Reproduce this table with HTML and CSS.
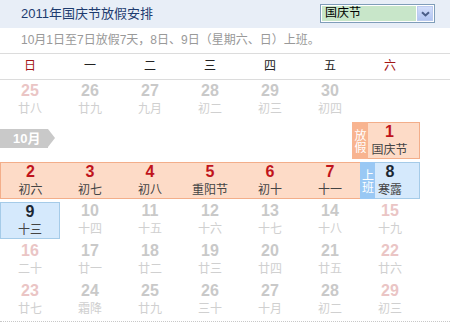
FILE: index.html
```html
<!DOCTYPE html>
<html lang="zh-CN">
<head>
<meta charset="utf-8">
<title>2011年国庆节放假安排</title>
<link rel="stylesheet" href="styles.css">
</head>
<body>
<div class="page">
  <header class="top">
    <h1 class="title">2011年国庆节放假安排</h1>
    <div class="select">
      <span class="select-value">国庆节</span>
      <span class="select-btn"><svg width="9" height="6" viewBox="0 0 9 6"><path d="M1 1.2 L4.5 4.5 L8 1.2" fill="none" stroke="#4a5d88" stroke-width="2"/></svg></span>
    </div>
  </header>
  <p class="note">10月1日至7日放假7天，8日、9日（星期六、日）上班。</p>
  <div class="weekdays">
    <span class="wkend">日</span><span>一</span><span>二</span><span>三</span><span>四</span><span>五</span><span class="wkend">六</span>
  </div>
  <div class="cal">
    <div class="cal-row">
      <div class="day wkd"><b class="num">25</b><span class="lunar">廿八</span></div>
      <div class="day"><b class="num">26</b><span class="lunar">廿九</span></div>
      <div class="day"><b class="num">27</b><span class="lunar">九月</span></div>
      <div class="day"><b class="num">28</b><span class="lunar">初二</span></div>
      <div class="day"><b class="num">29</b><span class="lunar">初三</span></div>
      <div class="day"><b class="num">30</b><span class="lunar">初四</span></div>
    </div>
    <div class="cal-row">
      <div class="month">10月</div>
      <div class="day hol single"><span class="tag tag-off"><span class="tag-text">放假</span></span><b class="num">1</b><span class="lunar">国庆节</span></div>
    </div>
    <div class="cal-row">
      <div class="day hol band-start"><b class="num">2</b><span class="lunar">初六</span></div>
      <div class="day hol"><b class="num">3</b><span class="lunar">初七</span></div>
      <div class="day hol"><b class="num">4</b><span class="lunar">初八</span></div>
      <div class="day hol"><b class="num">5</b><span class="lunar">重阳节</span></div>
      <div class="day hol"><b class="num">6</b><span class="lunar">初十</span></div>
      <div class="day hol"><b class="num">7</b><span class="lunar">十一</span></div>
      <div class="day work"><span class="tag tag-on"><span class="tag-text">上班</span></span><b class="num">8</b><span class="lunar">寒露</span></div>
    </div>
    <div class="cal-row">
      <div class="day work"><b class="num">9</b><span class="lunar">十三</span></div>
      <div class="day"><b class="num">10</b><span class="lunar">十四</span></div>
      <div class="day"><b class="num">11</b><span class="lunar">十五</span></div>
      <div class="day"><b class="num">12</b><span class="lunar">十六</span></div>
      <div class="day"><b class="num">13</b><span class="lunar">十七</span></div>
      <div class="day"><b class="num">14</b><span class="lunar">十八</span></div>
      <div class="day wkd"><b class="num">15</b><span class="lunar">十九</span></div>
    </div>
    <div class="cal-row">
      <div class="day wkd"><b class="num">16</b><span class="lunar">二十</span></div>
      <div class="day"><b class="num">17</b><span class="lunar">廿一</span></div>
      <div class="day"><b class="num">18</b><span class="lunar">廿二</span></div>
      <div class="day"><b class="num">19</b><span class="lunar">廿三</span></div>
      <div class="day"><b class="num">20</b><span class="lunar">廿四</span></div>
      <div class="day"><b class="num">21</b><span class="lunar">廿五</span></div>
      <div class="day wkd"><b class="num">22</b><span class="lunar">廿六</span></div>
    </div>
    <div class="cal-row">
      <div class="day wkd"><b class="num">23</b><span class="lunar">廿七</span></div>
      <div class="day"><b class="num">24</b><span class="lunar">霜降</span></div>
      <div class="day"><b class="num">25</b><span class="lunar">廿九</span></div>
      <div class="day"><b class="num">26</b><span class="lunar">三十</span></div>
      <div class="day"><b class="num">27</b><span class="lunar">十月</span></div>
      <div class="day"><b class="num">28</b><span class="lunar">初二</span></div>
      <div class="day wkd"><b class="num">29</b><span class="lunar">初三</span></div>
    </div>
  </div>
</div>
</body>
</html>
```
FILE: styles.css
```css
body {
  margin: 0;
  background: #fff;
  font-family: "Liberation Sans", "Noto Sans CJK SC", sans-serif;
}
.page {
  width: 450px;
}
.top {
  height: 28px;
  background: #e8eef7;
  display: flex;
  justify-content: space-between;
  align-items: flex-start;
  padding: 0 15px 0 21px;
  box-sizing: border-box;
}
.title {
  margin: 0;
  font-weight: normal;
  font-size: 13px;
  line-height: 28px;
  color: #1e3b6f;
}
.select {
  margin-top: 4px;
  width: 115px;
  height: 19px;
  box-sizing: border-box;
  border: 1px solid #7f9db9;
  background: #fff;
  padding: 1px;
  display: flex;
  gap: 1px;
}
.select-value {
  flex: 1;
  background: #c8e6c9;
  font-size: 12px;
  line-height: 15px;
  padding-left: 3px;
  color: #000;
}
.select-btn {
  width: 16px;
  height: 15px;
  box-sizing: border-box;
  background: linear-gradient(#d2ddfa, #b2c5f2);
  border: 1px solid #bccbef;
  display: flex;
  align-items: center;
  justify-content: center;
}
.note {
  margin: 0;
  height: 25px;
  border-bottom: 1px solid #dcdcdc;
  padding-left: 21px;
  font-size: 12px;
  line-height: 25px;
  color: #999;
}
.weekdays {
  display: grid;
  grid-template-columns: repeat(7, 60px);
  height: 25px;
  border-bottom: 1px solid #dcdcdc;
  font-size: 12px;
  line-height: 25px;
  text-align: center;
  color: #222;
}
.weekdays .wkend {
  color: #a31515;
}
.cal {
  padding-bottom: 1px;
  border-bottom: 1px dotted #c8c8c8;
}
.cal-row {
  display: grid;
  grid-template-columns: repeat(7, 60px);
  height: 40px;
}
.day {
  margin-top: 2px;
  height: 37px;
  box-sizing: border-box;
  text-align: center;
  position: relative;
}
.num {
  display: block;
  width: fit-content;
  margin: 0 auto;
  font-family: "Liberation Sans", sans-serif;
  font-weight: bold;
  font-size: 16px;
  line-height: 18px;
  color: #c9c9c9;
}
.wkd .num {
  color: #eac5c5;
}
.lunar {
  display: block;
  width: fit-content;
  margin: 1px auto 0;
  font-family: "Noto Sans CJK SC", sans-serif;
  font-size: 12px;
  line-height: 14px;
  color: #d0d0d0;
}
.hol {
  background: #fddbc7;
  border-top: 1px solid #f3ae8a;
  border-bottom: 1px solid #f3ae8a;
}
.hol .num {
  color: #c0141c;
}
.hol .lunar,
.work .lunar {
  color: #444;
}
.band-start {
  border-left: 1px solid #f3ae8a;
}
.single {
  grid-column: 7;
  border-right: 1px solid #f3ae8a;
}
.work {
  background: #d5e9fc;
  border: 1px solid #a5cbe8;
}
.work .num {
  color: #1b2733;
}
.tag {
  position: absolute;
  top: -1px;
  bottom: -1px;
  width: 15px;
  display: flex;
  justify-content: center;
  align-items: center;
}
.tag-text {
  writing-mode: vertical-rl;
  color: #fff;
  font-family: "Noto Sans CJK SC", sans-serif;
  font-size: 12px;
  line-height: 12px;
}
.tag-off {
  left: -8px;
  width: 16px;
  background: #f8b490;
}
.tag-on {
  left: -1px;
  background: #99c8f4;
}
.month {
  align-self: start;
  justify-self: start;
  margin-top: 9px;
  height: 19px;
  width: 48px;
  box-sizing: border-box;
  padding-left: 13px;
  background: #c9c9c9;
  color: #fff;
  font-weight: bold;
  font-size: 13px;
  line-height: 19px;
  position: relative;
}
.month::after {
  content: "";
  position: absolute;
  left: 100%;
  top: 0;
  border-left: 7px solid #c9c9c9;
  border-top: 9.5px solid transparent;
  border-bottom: 9.5px solid transparent;
}
```
